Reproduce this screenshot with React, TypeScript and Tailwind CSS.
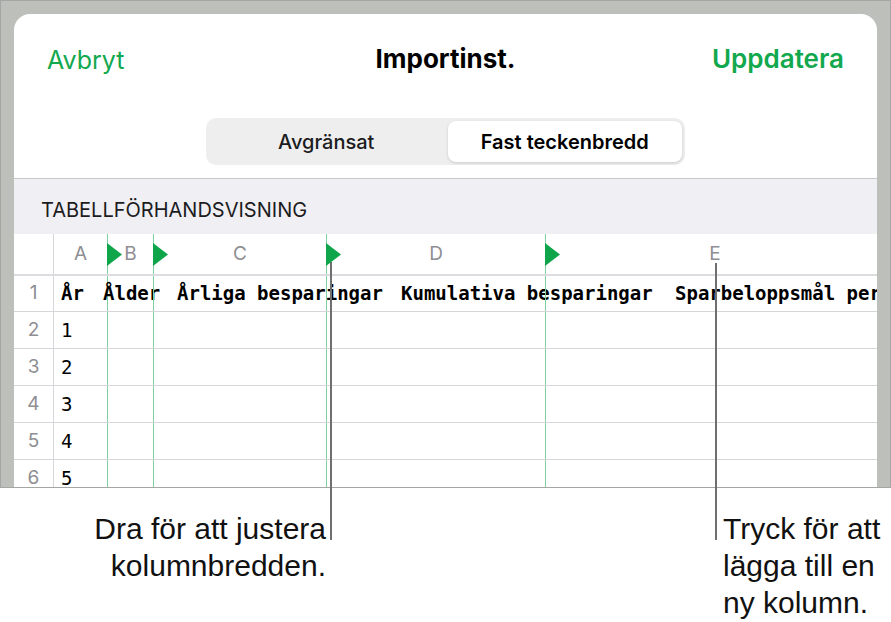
import React from "react";

const ui = { fontFamily: "Inter, 'Noto Sans', sans-serif" };
const mono = { fontFamily: "'DejaVu Sans Mono', 'Liberation Mono', monospace" };

const cols = [
  { letter: "A", w: "w-[54px]", flag: true },
  { letter: "B", w: "w-[46px]", flag: true },
  { letter: "C", w: "w-[173px]", flag: true },
  { letter: "D", w: "w-[219px]", flag: true },
];

function Flag() {
  return (
    <svg className="absolute top-[9px] -right-[15px] z-10" width="15" height="23" viewBox="0 0 15 23">
      <polygon points="0,0 15,11.5 0,23" fill="#0fa64b" />
    </svg>
  );
}

function Row(props: { num: string; h: string; children?: React.ReactNode }) {
  return (
    <div className={`flex ${props.h} border-b border-[#d6d6da] shrink-0`}>
      <div className="w-[40px] shrink-0 border-r border-[#d6d6da] flex items-center justify-center text-[19px] text-[#8e8e93]">
        {props.num}
      </div>
      <div className="w-[54px] shrink-0 border-r border-[#7fd09f] flex items-center pl-[7px] overflow-visible whitespace-nowrap">
        {props.children}
      </div>
      <div className="w-[46px] shrink-0 border-r border-[#7fd09f]" />
      <div className="w-[173px] shrink-0 border-r border-[#7fd09f]" />
      <div className="w-[219px] shrink-0 border-r border-[#7fd09f]" />
      <div className="flex-1" />
    </div>
  );
}

export default function App() {
  return (
    <div className="relative w-[891px] h-[622px] bg-white overflow-hidden" style={ui}>
      <div className="h-[488px] bg-[#bdbfbb] border border-[#a4a6a3] pt-[13px] pl-[13px] pr-[13px]">
        <div className="h-full bg-white rounded-t-[16px] overflow-hidden flex flex-col">
          <div className="h-[90px] shrink-0 grid grid-cols-3 items-center px-[33px] leading-[32px]">
            <span className="text-[25px] text-[#12a84e] pt-[2px]">Avbryt</span>
            <span className="text-[26px] font-bold text-black text-center">Importinst.</span>
            <span className="text-[26px] font-semibold text-[#12a84e] text-right">Uppdatera</span>
          </div>
          <div className="pt-[14px] pb-[13px] flex justify-center shrink-0">
            <div className="w-[479px] h-[47px] rounded-[10px] bg-[#eeeeef] p-[3px] grid grid-cols-2 gap-[4px]">
              <div className="flex items-center justify-center text-[20px] font-medium text-[#1c1c1e]">Avgränsat</div>
              <div className="flex items-center justify-center rounded-[8px] bg-white shadow-[0_1px_3px_rgba(0,0,0,0.15)] text-[20px] font-semibold text-black">
                Fast teckenbredd
              </div>
            </div>
          </div>
          <div className="h-[56px] shrink-0 border-t border-[#c8c8cc] bg-[#f0f0f4] pl-[27px] pt-[20px] text-[20px] leading-[22px] text-[#1c1c1e]">
            TABELLFÖRHANDSVISNING
          </div>
          <div className="flex flex-col flex-1 overflow-hidden">
            <div className="flex h-[42px] shrink-0 border-b-2 border-[#dcdce0]">
              <div className="w-[40px] shrink-0 border-r border-[#d6d6da]" />
              {cols.map((c) => (
                <div key={c.letter} className={`relative ${c.w} shrink-0 border-r border-[#7fd09f] flex items-center justify-center text-[19px] text-[#8e8e93]`}>
                  {c.letter}
                  {c.flag ? <Flag /> : null}
                </div>
              ))}
              <div className="w-[338px] shrink-0 flex items-center justify-center text-[19px] text-[#8e8e93]">E</div>
            </div>
            <Row num="1" h="h-[36px]">
              <span className="text-[19px] font-bold text-black" style={mono}>
                <span className="inline-block w-[42px]">År</span>
                <span className="inline-block w-[74px]">Ålder</span>
                <span className="inline-block w-[224px]">Årliga besparingar</span>
                <span className="inline-block w-[274px]">Kumulativa besparingar</span>
                <span className="inline-block">Sparbeloppsmål per</span>
              </span>
            </Row>
            {["1", "2", "3", "4", "5"].map((v, i) => (
              <Row key={v} num={String(i + 2)} h="h-[37px]">
                <span className="text-[19px] text-black" style={mono}>{v}</span>
              </Row>
            ))}
          </div>
        </div>
      </div>

      <div className="flex pt-[22px] text-[30px] leading-[37px] text-[#111]" style={{ fontFamily: "'Liberation Sans', Arial, sans-serif" }}>
        <div className="w-[326px] text-right">
          Dra för att justera
          <br />
          kolumnbredden.
        </div>
        <div className="ml-[397px]">
          Tryck för att
          <br />
          lägga till en
          <br />
          ny kolumn.
        </div>
      </div>

      <div className="absolute left-[330px] top-[262px] h-[278px] w-[2px] bg-[#6f6f6f]" />
      <div className="absolute left-[715px] top-[263px] h-[277px] w-[2px] bg-[#6f6f6f]" />
    </div>
  );
}
